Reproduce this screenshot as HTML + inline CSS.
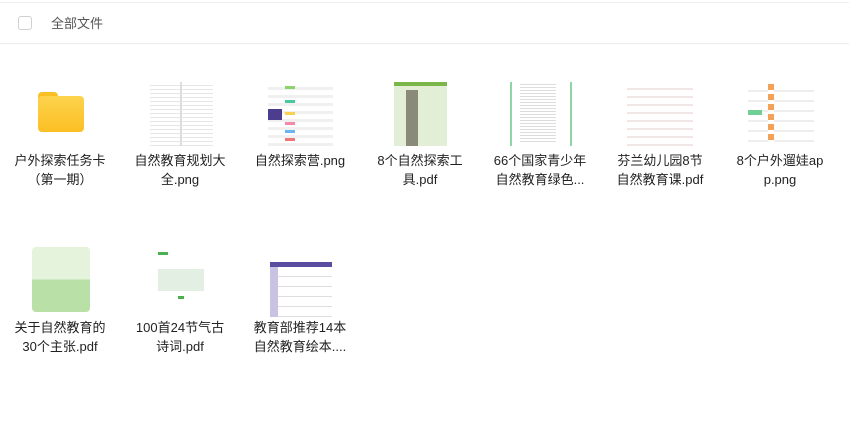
<!DOCTYPE html>
<html><head><meta charset="utf-8"><style>
body{margin:0;width:849px;height:443px;background:#fff;font-family:"Liberation Sans","Noto Sans CJK SC",sans-serif;overflow:hidden;position:relative}
.top{position:absolute;left:0;right:0;top:2px;height:1px;background:#eee}
.hdr{position:absolute;left:0;right:0;top:43px;height:1px;background:#ececec}
.cb{position:absolute;left:18px;top:16px;width:12px;height:12px;border:1px solid #d0d0d0;border-radius:3px}
.ht{position:absolute;left:51px;top:13px;font-size:13px;color:#555}
.it{position:absolute;width:120px;text-align:center}
.th{position:absolute;top:0;height:64px}
.lb{position:absolute;left:0;width:120px;font-size:13px;line-height:19px;color:#222}
</style></head><body>
<div class="top"></div><div class="cb"></div><div class="ht">全部文件</div><div class="hdr"></div>

<!-- row1 -->
<div class="it" style="left:0;top:82px">
 <div class="th" style="left:38px;top:10px;width:46px;height:40px">
  <div style="position:absolute;left:0;top:0;width:20px;height:10px;background:#fbbf24;border-radius:4px 4px 0 0"></div>
  <div style="position:absolute;left:0;top:4px;width:46px;height:36px;background:linear-gradient(#fdd34d,#fbbf24);border-radius:4px"></div>
 </div>
 <div class="lb" style="top:69px">户外探索任务卡<br>（第一期）</div>
</div>
<div class="it" style="left:120px;top:82px">
 <div class="th" style="left:30px;width:63px;background:repeating-linear-gradient(#fff 0 3px,#e6e6e6 3px 4px)">
  <div style="position:absolute;left:30px;top:0;width:2px;height:64px;background:#ddd"></div></div>
 <div class="lb" style="top:69px">自然教育规划大<br>全.png</div>
</div>
<div class="it" style="left:240px;top:82px">
 <div class="th" style="left:28px;width:65px;background:repeating-linear-gradient(#fff 0 5px,#f0f0f0 5px 8px)">
  <div style="position:absolute;left:0;top:27px;width:14px;height:11px;background:#4c3d8f"></div>
  <div style="position:absolute;left:17px;top:4px;width:10px;height:3px;background:#8bd36b"></div>
  <div style="position:absolute;left:17px;top:18px;width:10px;height:3px;background:#4cc99b"></div>
  <div style="position:absolute;left:17px;top:30px;width:10px;height:3px;background:#f9d34f"></div>
  <div style="position:absolute;left:17px;top:40px;width:10px;height:3px;background:#f58aa8"></div>
  <div style="position:absolute;left:17px;top:48px;width:10px;height:3px;background:#6ab6f5"></div>
  <div style="position:absolute;left:17px;top:56px;width:10px;height:3px;background:#ef7676"></div>
 </div>
 <div class="lb" style="top:69px">自然探索营.png</div>
</div>
<div class="it" style="left:360px;top:82px">
 <div class="th" style="left:34px;width:53px;background:#e2efd6;border-top:4px solid #7ab648;height:60px">
  <div style="position:absolute;left:12px;top:4px;width:12px;height:56px;background:#8a8a7a"></div></div>
 <div class="lb" style="top:69px">8个自然探索工<br>具.pdf</div>
</div>
<div class="it" style="left:480px;top:82px">
 <div class="th" style="left:30px;width:62px;border-left:2px solid #8ed6a8;border-right:2px solid #8ed6a8;box-sizing:border-box;background:repeating-linear-gradient(#fff 0 2px,#ddd 2px 3px);background-clip:content-box;padding:2px 14px 2px 8px"></div>
 <div class="lb" style="top:69px">66个国家青少年<br>自然教育绿色...</div>
</div>
<div class="it" style="left:600px;top:82px">
 <div class="th" style="left:27px;width:66px;background:repeating-linear-gradient(#fff 0 6px,#f1e6e6 6px 8px)"></div>
 <div class="lb" style="top:69px">芬兰幼儿园8节<br>自然教育课.pdf</div>
</div>
<div class="it" style="left:720px;top:82px">
 <div class="th" style="left:28px;width:66px;background:repeating-linear-gradient(#fff 0 8px,#eee 8px 10px)">
  <div style="position:absolute;left:0;top:28px;width:14px;height:5px;background:#6fcf97"></div>
  <div style="position:absolute;left:20px;top:2px;width:6px;height:58px;background:repeating-linear-gradient(#f3a25a 0 6px,#fff 6px 10px)"></div></div>
 <div class="lb" style="top:69px">8个户外遛娃ap<br>p.png</div>
</div>

<!-- row2 -->
<div class="it" style="left:0;top:247px">
 <div class="th" style="left:32px;width:58px;height:65px;border-radius:4px;background:linear-gradient(#e5f2dc 0 50%,#b9e0a6 50%)"></div>
 <div class="lb" style="top:71px">关于自然教育的<br>30个主张.pdf</div>
</div>
<div class="it" style="left:120px;top:247px">
 <div class="th" style="left:38px;width:46px;height:65px;background:#fff">
  <div style="position:absolute;left:0;top:5px;width:10px;height:3px;background:#4caf50"></div>
  <div style="position:absolute;left:0;top:22px;width:46px;height:22px;background:#e4efe4"></div>
  <div style="position:absolute;left:20px;top:49px;width:6px;height:3px;background:#4caf50"></div></div>
 <div class="lb" style="top:71px">100首24节气古<br>诗词.pdf</div>
</div>
<div class="it" style="left:240px;top:247px">
 <div class="th" style="left:30px;width:62px;top:15px;height:50px;background:repeating-linear-gradient(#fff 0 9px,#ddd 9px 10px);border-top:5px solid #5a4ca0">
  <div style="position:absolute;left:0;top:0;width:8px;height:50px;background:#c9c2e3"></div></div>
 <div class="lb" style="top:71px">教育部推荐14本<br>自然教育绘本....</div>
</div>
</body></html>
